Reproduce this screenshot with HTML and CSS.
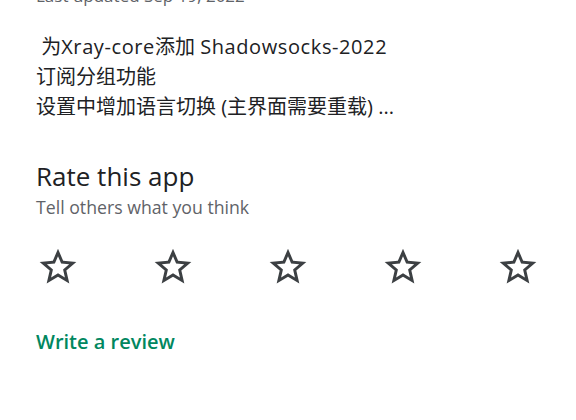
FILE: index.html
```html
<!DOCTYPE html>
<html>
<head>
<meta charset="utf-8">
<link rel="stylesheet" href="styles.css">
</head>
<body>
<div class="page">
  <div class="updated">Last updated Sep 19, 2022</div>
  <div class="changelog">
    <div class="line">&nbsp;为<span class="latin">Xray-core</span>添加 <span class="latin">Shadowsocks-2022</span></div>
    <div class="line">订阅分组功能</div>
    <div class="line">设置中增加语言切换 (主界面需要重载) ...</div>
  </div>
  <div class="rate">
    <h2 class="rate-title">Rate this app</h2>
    <div class="rate-sub">Tell others what you think</div>
  </div>
  <div class="stars">
    <svg class="star" viewBox="0 0 24 24"><path d="M22 9.24l-7.19-.62L12 2 9.19 8.63 2 9.24l5.46 4.73L5.82 21 12 17.27 18.18 21l-1.63-7.03L22 9.24zM12 15.4l-3.76 2.27 1-4.28-3.32-2.88 4.38-.38L12 6.1l1.71 4.04 4.38.38-3.32 2.88 1 4.28L12 15.4z"/></svg>
    <svg class="star" viewBox="0 0 24 24"><path d="M22 9.24l-7.19-.62L12 2 9.19 8.63 2 9.24l5.46 4.73L5.82 21 12 17.27 18.18 21l-1.63-7.03L22 9.24zM12 15.4l-3.76 2.27 1-4.28-3.32-2.88 4.38-.38L12 6.1l1.71 4.04 4.38.38-3.32 2.88 1 4.28L12 15.4z"/></svg>
    <svg class="star" viewBox="0 0 24 24"><path d="M22 9.24l-7.19-.62L12 2 9.19 8.63 2 9.24l5.46 4.73L5.82 21 12 17.27 18.18 21l-1.63-7.03L22 9.24zM12 15.4l-3.76 2.27 1-4.28-3.32-2.88 4.38-.38L12 6.1l1.71 4.04 4.38.38-3.32 2.88 1 4.28L12 15.4z"/></svg>
    <svg class="star" viewBox="0 0 24 24"><path d="M22 9.24l-7.19-.62L12 2 9.19 8.63 2 9.24l5.46 4.73L5.82 21 12 17.27 18.18 21l-1.63-7.03L22 9.24zM12 15.4l-3.76 2.27 1-4.28-3.32-2.88 4.38-.38L12 6.1l1.71 4.04 4.38.38-3.32 2.88 1 4.28L12 15.4z"/></svg>
    <svg class="star" viewBox="0 0 24 24"><path d="M22 9.24l-7.19-.62L12 2 9.19 8.63 2 9.24l5.46 4.73L5.82 21 12 17.27 18.18 21l-1.63-7.03L22 9.24zM12 15.4l-3.76 2.27 1-4.28-3.32-2.88 4.38-.38L12 6.1l1.71 4.04 4.38.38-3.32 2.88 1 4.28L12 15.4z"/></svg>
  </div>
  <a class="review">Write a review</a>
</div>
</body>
</html>
```
FILE: styles.css
```css
html, body {
  margin: 0;
  padding: 0;
  background: #ffffff;
}
body {
  width: 576px;
  height: 420px;
  overflow: hidden;
  font-family: "Open Sans", "Noto Sans CJK SC", sans-serif;
}
.page {
  padding: 0 36px;
  margin-top: -16px;
}
.updated {
  font-size: 17px;
  line-height: 24px;
  color: #5f6368;
}
.changelog {
  margin-top: 24px;
  font-size: 20px;
  line-height: 30px;
  color: #202124;
}
.latin {
  letter-spacing: 0.6px;
}
.rate {
  margin-top: 38px;
}
.rate-title {
  margin: 0;
  font-size: 26px;
  line-height: 32px;
  font-weight: 400;
  color: #202124;
}
.rate-sub {
  margin-top: 2px;
  font-size: 17.7px;
  line-height: 26px;
  color: #5f6368;
}
.stars {
  display: flex;
  justify-content: space-between;
  margin-top: 25px;
}
.star {
  width: 44px;
  height: 44px;
  fill: #3c4043;
}
.review {
  display: block;
  margin-top: 39px;
  font-size: 20px;
  line-height: 28px;
  font-weight: 600;
  color: #01875f;
}
```
